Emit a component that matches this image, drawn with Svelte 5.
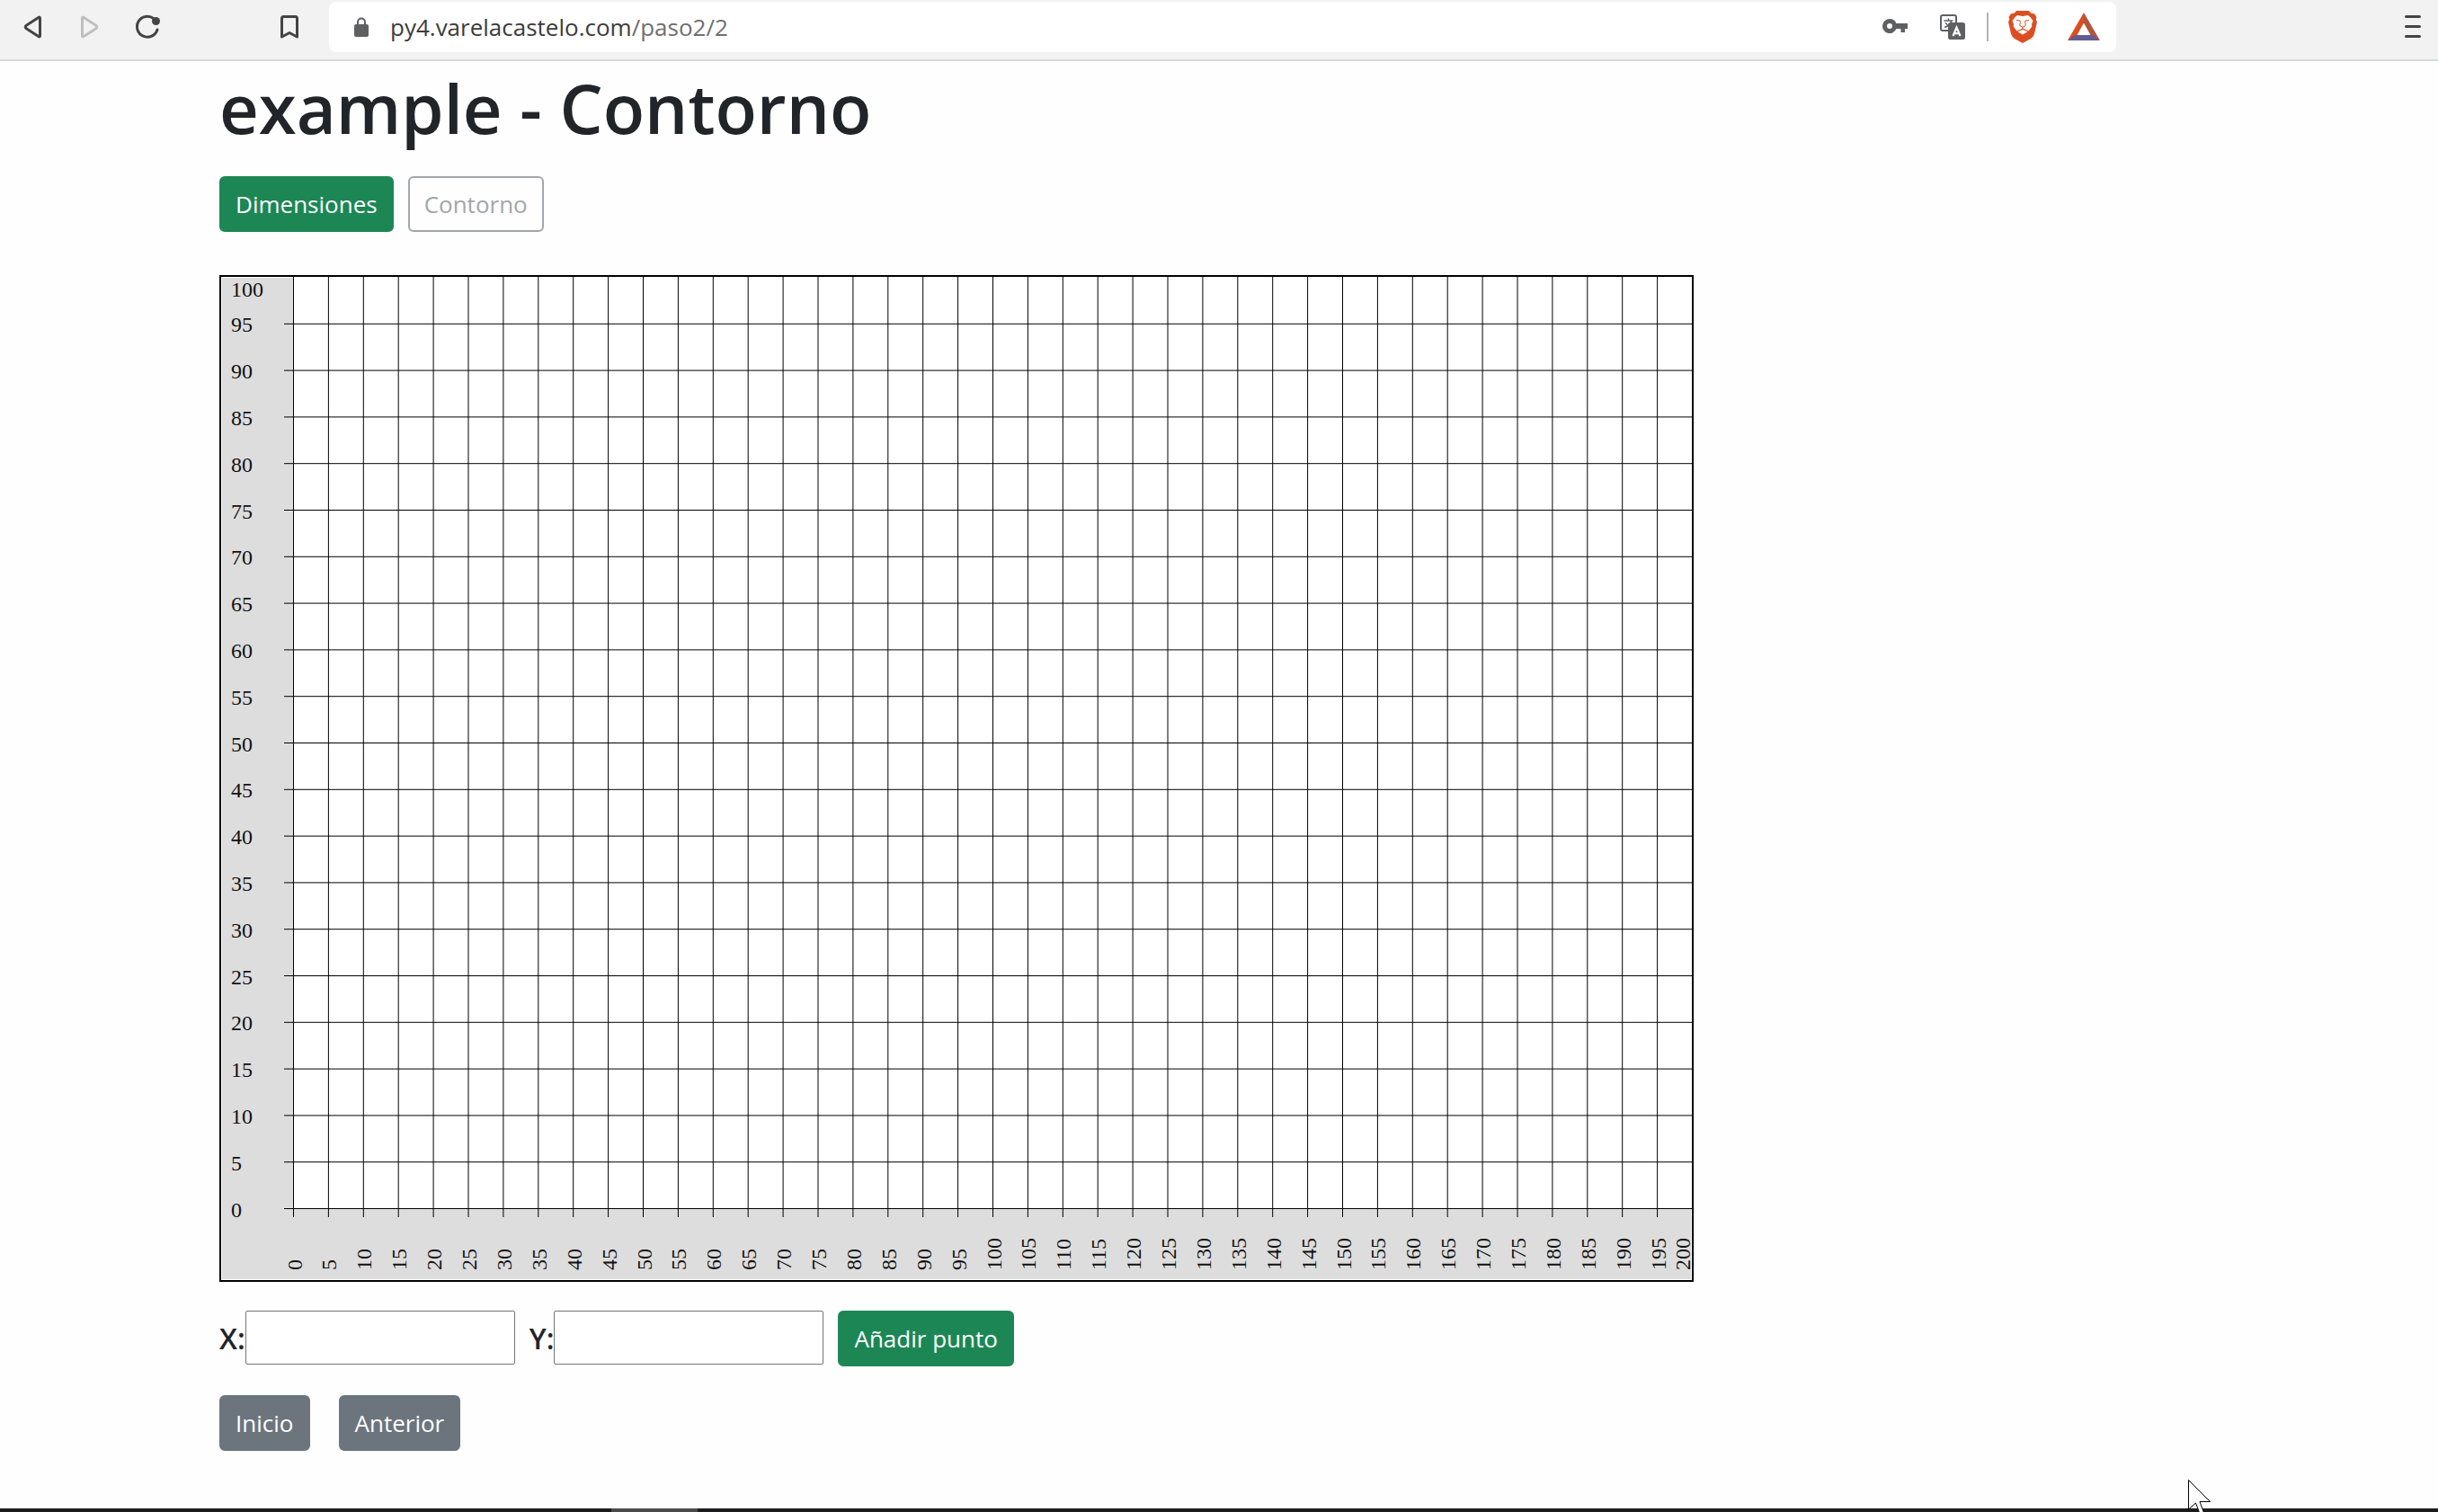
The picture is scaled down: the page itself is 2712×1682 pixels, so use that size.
<script>
  const chartWidth = 1636;
  const chartHeight = 1116;
  const margin = 80;
  const step = 5;
  const maxX = 200;
  const maxY = 100;

  const unitX = (chartWidth - margin) / maxX;
  const unitY = (chartHeight - margin) / maxY;
  const baseY = chartHeight - margin;

  const xTicks = Array.from({ length: maxX / step + 1 }, (_, i) => i * step);
  const yTicks = Array.from({ length: maxY / step + 1 }, (_, i) => i * step);

  // Half a unit centres a one-unit stroke on the pixel grid.
  const posX = (v) => margin + v * unitX + 0.5;
  const posY = (v) => baseY - v * unitY + 0.5;

  let x = $state('');
  let y = $state('');
</script>

<div class="page">
  <header class="toolbar">
    <nav class="nav" aria-label="Navegador">
      <button class="icon" aria-label="Atrás">
        <svg width="36" height="36" viewBox="0 0 36 36"><path d="M25.200 7.300Q26.500 6.600 26.500 8.500V27.500Q26.500 29.400 25.200 28.700L11.300 19.800Q9 18 11.300 16.200Z" fill="none" stroke="#444" stroke-width="3" stroke-linejoin="round" /></svg>
      </button>
      <button class="icon" aria-label="Adelante">
        <svg width="36" height="36" viewBox="0 0 36 36"><path d="M10.800 7.300Q9.500 6.600 9.500 8.500V27.500Q9.500 29.400 10.800 28.700L24.700 19.800Q27 18 24.700 16.200Z" fill="none" stroke="#bfbfbf" stroke-width="3" stroke-linejoin="round" /></svg>
      </button>
      <button class="icon" aria-label="Recargar">
        <svg width="36" height="36" viewBox="0 0 36 36"><path d="M25 8.600A11.500 11.500 0 1 0 29 21" fill="none" stroke="#444" stroke-width="3" stroke-linecap="round" /><circle cx="27.500" cy="11.500" r="4.500" fill="#444" /></svg>
      </button>
    </nav>
    <button class="icon mark" aria-label="Marcador">
      <svg width="36" height="36" viewBox="0 0 36 36"><path d="M9.500 8.500Q9.500 6.500 11.500 6.500H24.500Q26.500 6.500 26.500 8.500V29L18 24.500L9.500 29Z" fill="none" stroke="#444" stroke-width="3" stroke-linejoin="round" /></svg>
    </button>
    <div class="address">
      <svg width="36" height="36" viewBox="0 0 36 36"><path d="M14 16V12.500a4 4 0 0 1 8 0V16" fill="none" stroke="#5f6063" stroke-width="2" /><rect x="10" y="15" width="16" height="14" rx="2" fill="#5f6063" /></svg>
      <a class="url" href="/paso2/2">py4.varelacastelo.com<span>/paso2/2</span></a>
      <button class="icon" aria-label="Contraseñas">
        <svg width="36" height="36" viewBox="0 0 36 36"><path d="M12 9a8 8 0 1 0 7.400 11H24.500V24H29V20H32V14H19.400A8 8 0 0 0 12 9Z" fill="#5f6063" /><circle cx="12" cy="17" r="3" fill="#fff" /></svg>
      </button>
      <button class="icon" aria-label="Traducir">
        <svg width="36" height="36" viewBox="0 0 36 36">
          <rect x="5" y="5" width="17" height="17" rx="2" fill="#fff" stroke="#5f6063" stroke-width="2" />
          <path d="M8.500 11H18.500M13.500 8.500V11M17 11Q15.500 16.500 9 18.500M10 13Q12 16.500 16 18.500" fill="none" stroke="#5f6063" stroke-width="1.500" />
          <rect x="13" y="13" width="19" height="19" rx="2.500" fill="#5f6063" />
          <path d="M18.500 28L22.500 18.500L26.500 28M20 25.200H25" fill="none" stroke="#fff" stroke-width="2.200" />
        </svg>
      </button>
      <i class="divider"></i>
      <button class="icon" aria-label="Brave Shields">
        <svg width="36" height="36" viewBox="0 0 36 36">
          <path d="M11 0H25L27.500 2.800L31 3.300L33.500 7L32.700 9.500L34 12.500L31 25.500Q30 29 27 31L18 36L9 31Q6 29 5 25.500L2 12.500L3.300 9.500L2.500 7L5 3.300L8.500 2.800Z" fill="#dc4e22" />
          <path d="M12 5L18 6L24 5Q26.500 6.500 29.500 11L28 15L28.300 17.500L24.500 22.500L18 19.500L11.500 22.500L7.700 17.500L8 15L6.500 11Q9.500 6.500 12 5Z" fill="#fff" />
          <path d="M18 21L23.500 23.200L18 26.500L12.500 23.200Z" fill="#fff" />
          <path d="M11 10.500L15 11L15.300 12.500L14.800 16.500L18 18.200L21.200 16.500L20.700 12.500L21 11L25 10.500M18 18V20.500" fill="none" stroke="#dc4e22" stroke-width="1" />
        </svg>
      </button>
      <button class="icon reward" aria-label="Brave Rewards">
        <svg width="36" height="36" viewBox="0 0 36 36">
          <path d="M18 2V13.500L10.500 27L0 33Z" fill="#dc4e22" />
          <path d="M18 2V13.500L25.500 27L36 33Z" fill="#b1563d" />
          <path d="M8 27H28L36 33H0Z" fill="#665b91" />
        </svg>
      </button>
    </div>
    <button class="icon menu" aria-label="Menú">
      <svg width="36" height="36" viewBox="0 0 36 36"><path d="M10.500 6.500H25.500M10.500 17.500H25.500M10.500 28.500H25.500" stroke="#444" stroke-width="3" stroke-linecap="round" /></svg>
    </button>
  </header>

  <main>
    <h1>example - Contorno</h1>
    <div class="steps">
      <button class="btn green">Dimensiones</button>
      <button class="btn outline" disabled>Contorno</button>
    </div>

    <svg class="chart" viewBox="0 0 {chartWidth} {chartHeight}" role="img" aria-label="Contorno">
      <rect x="1" y="1" width={margin - 1} height={chartHeight - 2} fill="#ddd" />
      <rect x="1" y={baseY} width={chartWidth - 2} height={margin - 1} fill="#ddd" />
      {#each yTicks as v}
        {#if v < maxY}
          <line x1={margin - 10} x2={chartWidth} y1={posY(v)} y2={posY(v)} />
          <text x="11" y={posY(v) + 9}>{v}</text>
        {:else}
          <text x="11" y="22">{v}</text>
        {/if}
      {/each}
      {#each xTicks as v}
        {#if v < maxX}
          <line x1={posX(v)} x2={posX(v)} y1="0" y2={baseY + 10} />
          <text transform="translate({posX(v) + 9} {chartHeight - 11}) rotate(-90)">{v}</text>
        {:else}
          <text transform="translate({chartWidth - 2} {chartHeight - 11}) rotate(-90)">{v}</text>
        {/if}
      {/each}
    </svg>

    <form class="point" onsubmit={(e) => e.preventDefault()}>
      <label for="px">X:</label>
      <input id="px" type="text" bind:value={x} />
      <label class="second" for="py">Y:</label>
      <input id="py" type="text" bind:value={y} />
      <button class="btn green add">Añadir punto</button>
    </form>

    <div class="links">
      <button class="btn gray">Inicio</button>
      <button class="btn gray">Anterior</button>
    </div>
  </main>

  <footer class="taskbar"><span></span></footer>

  <svg class="cursor" width="28" height="36" viewBox="0 0 28 36"><path d="M0.500 0.500V33L8.500 26L13 38H18L13 24.500H24.500Z" fill="#fff" stroke="#000" stroke-width="1" /></svg>
</div>

<style>
  :global(body) {
    margin: 0;
    background: #fefefe;
  }

  .page {
    display: flex;
    flex-direction: column;
    min-height: 100vh;
    position: relative;
    overflow: hidden;
    font-family: "Open Sans", "Noto Sans", sans-serif;
    color: #212529;
  }

  .page * {
    box-sizing: border-box;
  }

  button,
  input {
    font: inherit;
  }

  .toolbar {
    display: flex;
    padding: 2px 0 8px 4px;
    background: #f2f2f2;
    border-bottom: 2px solid #d5dade;
  }

  .nav {
    display: flex;
  }

  .icon {
    display: flex;
    align-items: center;
    justify-content: center;
    width: 64px;
    height: 56px;
    padding: 0;
    border: 0;
    background: none;
  }

  .mark {
    margin: 0 12px 0 94px;
  }

  .address {
    flex: 1;
    display: flex;
    align-items: center;
    padding: 0 4px 0 18px;
    margin-right: 302px;
    border-radius: 8px;
    background: #fff;
  }

  .url {
    flex: 1;
    margin-left: 14px;
    font-size: 26px;
    line-height: 36px;
    color: #3c3c3c;
    text-decoration: none;
  }

  .url span {
    color: #6f6f6f;
  }

  .divider {
    width: 2px;
    height: 32px;
    margin: 0 6px;
    background: #b4b4b4;
  }

  .reward {
    margin-left: 4px;
  }

  .menu {
    width: 56px;
  }

  main {
    flex: 1;
    padding: 4px 9% 64px;
  }

  h1 {
    margin: 0 0 28px;
    font-size: 76px;
    line-height: 96px;
    font-weight: 600;
  }

  .steps {
    display: flex;
    gap: 16px;
    margin-bottom: 48px;
  }

  .btn {
    height: 62px;
    padding: 0 16px;
    border: 2px solid transparent;
    border-radius: 6px;
    font-size: 26px;
    line-height: 40px;
    color: #fff;
    white-space: nowrap;
  }

  .green {
    background: #1c8755;
    border-color: #1c8755;
  }

  .gray {
    background: #6c757d;
    border-color: #6c757d;
  }

  .outline {
    background: transparent;
    border-color: #a3a6aa;
    color: #a3a6aa;
  }

  .chart {
    display: block;
    width: 100%;
    max-width: 1640px;
    border: 2px solid #000;
    background: #fff;
  }

  .chart line {
    stroke: #000;
    stroke-width: 1;
  }

  .chart text {
    font-family: "Liberation Serif", "Times New Roman", serif;
    font-size: 24px;
    fill: #111;
  }

  .point {
    display: flex;
    align-items: flex-start;
    margin-top: 32px;
  }

  .point label {
    font-size: 32px;
    line-height: 62px;
    font-weight: 600;
  }

  .point input {
    width: 300px;
    height: 60px;
    padding: 0 8px;
    border: 1px solid #767676;
    border-radius: 2px;
    background: #fff;
    font-size: 28px;
  }

  .second,
  .add {
    margin-left: 16px;
  }

  .links {
    display: flex;
    gap: 32px;
    margin-top: 32px;
  }

  .taskbar {
    height: 4px;
    padding-left: 680px;
    background: #1c1b1f;
  }

  .taskbar span {
    display: block;
    width: 96px;
    height: 4px;
    background: #4a4a4a;
  }

  .cursor {
    position: absolute;
    right: 250px;
    bottom: 0;
  }
</style>
